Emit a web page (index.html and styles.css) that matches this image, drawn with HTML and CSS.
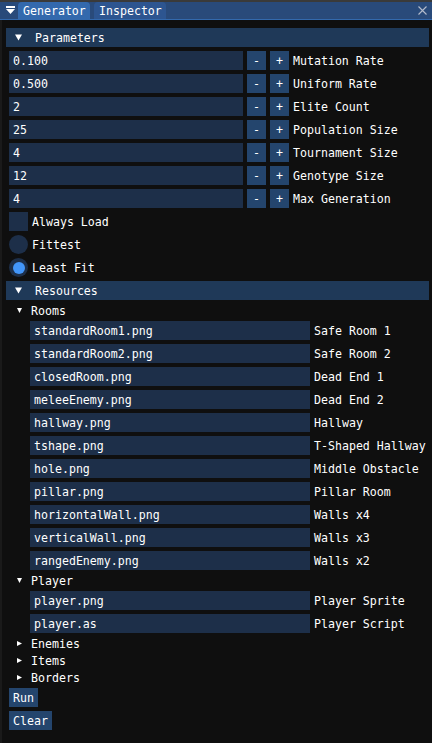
FILE: index.html
```html
<!DOCTYPE html>
<html>
<head>
<meta charset="utf-8">
<link rel="stylesheet" href="styles.css">
</head>
<body>
<div class="window">
  <div class="titlebar">
    <svg class="menu-icon" width="9" height="9" viewBox="0 0 9 9"><rect x="0" y="0" width="9" height="2" fill="#fff"/><polygon points="0,3 9,3 4.5,8" fill="#fff"/></svg>
    <div class="tab active">Generator</div>
    <div class="tab">Inspector</div>
    <svg class="close" width="9" height="9" viewBox="0 0 9 9"><path d="M0.5 0.5 L8.5 8.5 M8.5 0.5 L0.5 8.5" stroke="#b4bccc" stroke-width="1.1"/></svg>
  </div>
  <div class="content">
    <div class="header"><svg class="tri-big" width="7" height="7" viewBox="0 0 7 7"><polygon points="0,0.5 7,0.5 3.5,6.5" fill="#fff"/></svg><span>Parameters</span></div>

    <div class="prow"><div class="input">0.100</div><div class="btn">-</div><div class="btn">+</div><div class="label">Mutation Rate</div></div>
    <div class="prow"><div class="input">0.500</div><div class="btn">-</div><div class="btn">+</div><div class="label">Uniform Rate</div></div>
    <div class="prow"><div class="input">2</div><div class="btn">-</div><div class="btn">+</div><div class="label">Elite Count</div></div>
    <div class="prow"><div class="input">25</div><div class="btn">-</div><div class="btn">+</div><div class="label">Population Size</div></div>
    <div class="prow"><div class="input">4</div><div class="btn">-</div><div class="btn">+</div><div class="label">Tournament Size</div></div>
    <div class="prow"><div class="input">12</div><div class="btn">-</div><div class="btn">+</div><div class="label">Genotype Size</div></div>
    <div class="prow"><div class="input">4</div><div class="btn">-</div><div class="btn">+</div><div class="label">Max Generation</div></div>

    <div class="opt"><div class="checkbox"></div><span class="opt-text">Always Load</span></div>
    <div class="opt"><div class="radio"></div><span class="opt-text">Fittest</span></div>
    <div class="opt"><div class="radio"><div class="dot"></div></div><span class="opt-text">Least Fit</span></div>

    <div class="header"><svg class="tri-big" width="7" height="7" viewBox="0 0 7 7"><polygon points="0,0.5 7,0.5 3.5,6.5" fill="#fff"/></svg><span>Resources</span></div>

    <div class="node"><svg class="tri" width="5" height="5" viewBox="0 0 5 5"><polygon points="0,0 5,0 2.5,5" fill="#fff"/></svg><span>Rooms</span></div>
    <div class="frow"><div class="input">standardRoom1.png</div><div class="label">Safe Room 1</div></div>
    <div class="frow"><div class="input">standardRoom2.png</div><div class="label">Safe Room 2</div></div>
    <div class="frow"><div class="input">closedRoom.png</div><div class="label">Dead End 1</div></div>
    <div class="frow"><div class="input">meleeEnemy.png</div><div class="label">Dead End 2</div></div>
    <div class="frow"><div class="input">hallway.png</div><div class="label">Hallway</div></div>
    <div class="frow"><div class="input">tshape.png</div><div class="label">T-Shaped Hallway</div></div>
    <div class="frow"><div class="input">hole.png</div><div class="label">Middle Obstacle</div></div>
    <div class="frow"><div class="input">pillar.png</div><div class="label">Pillar Room</div></div>
    <div class="frow"><div class="input">horizontalWall.png</div><div class="label">Walls x4</div></div>
    <div class="frow"><div class="input">verticalWall.png</div><div class="label">Walls x3</div></div>
    <div class="frow"><div class="input">rangedEnemy.png</div><div class="label">Walls x2</div></div>

    <div class="node"><svg class="tri" width="5" height="5" viewBox="0 0 5 5"><polygon points="0,0 5,0 2.5,5" fill="#fff"/></svg><span>Player</span></div>
    <div class="frow"><div class="input">player.png</div><div class="label">Player Sprite</div></div>
    <div class="frow"><div class="input">player.as</div><div class="label">Player Script</div></div>

    <div class="node"><svg class="tri" width="5" height="5" viewBox="0 0 5 5"><polygon points="0,0 5,2.5 0,5" fill="#fff"/></svg><span>Enemies</span></div>
    <div class="node"><svg class="tri" width="5" height="5" viewBox="0 0 5 5"><polygon points="0,0 5,2.5 0,5" fill="#fff"/></svg><span>Items</span></div>
    <div class="node"><svg class="tri" width="5" height="5" viewBox="0 0 5 5"><polygon points="0,0 5,2.5 0,5" fill="#fff"/></svg><span>Borders</span></div>

    <div class="button">Run</div>
    <div class="button">Clear</div>
  </div>
</div>
</body>
</html>
```

FILE: styles.css
```css
* { box-sizing: border-box; }
html, body {
  margin: 0;
  padding: 0;
  background: #0f0f0f;
}
body {
  width: 432px;
  height: 743px;
  overflow: hidden;
  font-family: "DejaVu Sans Mono", "Liberation Mono", monospace;
  font-size: 11.6px;
  line-height: 13px;
  color: #ffffff;
}
.window {
  height: 743px;
  background: #0f0f0f;
  box-shadow: inset 2px 0 0 #1a1a1a;
}
.titlebar {
  height: 20px;
  display: flex;
  align-items: flex-end;
  background: #294a7a;
  border-top: 2px solid #3a3a3a;
  border-bottom: 1px solid #3369ad;
}
.menu-icon {
  align-self: center;
  margin-left: 6px;
  margin-right: 3px;
}
.tab {
  height: 17px;
  width: 72px;
  padding: 2px 0 0 5px;
  display: flex;
  align-items: center;
  border-radius: 4px 4px 0 0;
  background: #2d5590;
  margin-right: 4px;
  white-space: pre;
}
.tab.active {
  background: #3369ad;
}
.close {
  align-self: center;
  margin-left: auto;
  margin-right: 5px;
}
.content {
  padding: 8px 6px 0 9px;
  display: flex;
  flex-direction: column;
  gap: 4px;
}
.header {
  height: 19px;
  margin: 0 -3px;
  background: #1f3958;
  display: flex;
  align-items: center;
  padding: 2px 0 0 9px;
}
.tri-big {
  margin-right: 13px;
  margin-bottom: 3px;
}
.prow, .frow {
  height: 19px;
  display: flex;
  gap: 4px;
}
.frow {
  padding-left: 21px;
}
.input {
  background: #1d2f49;
  padding: 2px 4px 0 4px;
  display: flex;
  align-items: center;
  white-space: pre;
}
.prow .input { width: 234px; }
.frow .input { width: 280px; }
.btn {
  width: 19px;
  padding-top: 2px;
  background: #24456d;
  display: flex;
  align-items: center;
  justify-content: center;
}
.label {
  padding-top: 2px;
  display: flex;
  align-items: center;
  white-space: pre;
}
.opt {
  height: 19px;
  display: flex;
  align-items: center;
  gap: 4px;
}
.opt-text {
  padding-top: 2px;
}
.checkbox {
  width: 19px;
  height: 19px;
  background: #1d2f49;
}
.radio {
  width: 19px;
  height: 19px;
  border-radius: 50%;
  background: #1d2f49;
  display: flex;
  align-items: center;
  justify-content: center;
}
.dot {
  width: 12px;
  height: 12px;
  border-radius: 50%;
  background: #4296fa;
}
.node {
  height: 13px;
  display: flex;
  align-items: center;
  padding: 2px 0 0 8px;
}
.tri {
  margin-right: 9px;
  margin-bottom: 2px;
}
.button {
  align-self: flex-start;
  height: 19px;
  padding: 2px 4px 0 4px;
  background: #24456d;
  display: flex;
  align-items: center;
}
```
